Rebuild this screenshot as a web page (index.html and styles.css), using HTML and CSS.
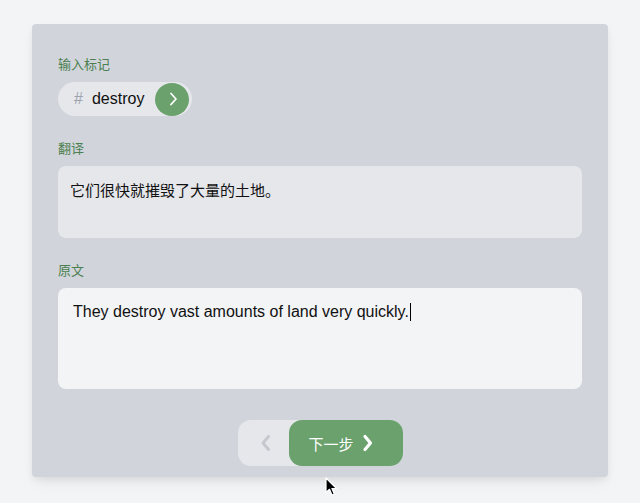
FILE: index.html
```html
<!DOCTYPE html>
<html lang="zh">
<head>
<meta charset="utf-8">
<link rel="stylesheet" href="styles.css">
</head>
<body>
<div class="card">
  <div class="section">
    <div class="label">输入标记</div>
    <div class="pill">
      <span class="hash">#</span>
      <span class="word">destroy</span>
      <span class="go">
        <svg width="12" height="14" viewBox="0 0 12 14"><path d="M4 1.5 L9 7 L4 12.5" fill="none" stroke="#fff" stroke-width="1.8" stroke-linecap="round" stroke-linejoin="round"/></svg>
      </span>
    </div>
  </div>
  <div class="section">
    <div class="label">翻译</div>
    <div class="box box-trans">它们很快就摧毁了大量的土地。</div>
  </div>
  <div class="section">
    <div class="label">原文</div>
    <div class="box box-src">They destroy vast amounts of land very quickly.<span class="caret"></span></div>
  </div>
  <div class="actions">
    <div class="group">
      <button class="prev" type="button">
        <svg width="12" height="18" viewBox="0 0 12 18"><path d="M8.5 2.5 L3 9 L8.5 15.5" fill="none" stroke="#c5c9ce" stroke-width="3" stroke-linecap="round" stroke-linejoin="round"/></svg>
      </button>
      <button class="next" type="button">
        <span>下一步</span>
        <svg width="12" height="18" viewBox="0 0 12 18"><path d="M3 2.5 L8.5 9 L3 15.5" fill="none" stroke="#fff" stroke-width="3.2" stroke-linecap="round" stroke-linejoin="round"/></svg>
      </button>
    </div>
  </div>
</div>
<svg class="cursor" width="14" height="20" viewBox="0 0 14 20"><path d="M1 1 L1 15.5 L4.5 12.3 L7 18 L9.3 17 L6.9 11.5 L11.5 11.5 Z" fill="#000" stroke="#fff" stroke-width="1.2" stroke-linejoin="round"/></svg>
</body>
</html>
```
FILE: styles.css
```css
html, body {
  margin: 0;
  padding: 0;
}
body {
  background: #f3f4f6;
  font-family: "Liberation Sans", "Noto Sans CJK SC", sans-serif;
  color: #111;
  height: 503px;
  overflow: hidden;
  position: relative;
}
.card {
  width: 576px;
  box-sizing: border-box;
  margin: 24px auto 0;
  background: #d1d5db;
  border-radius: 4px;
  padding: 30px 26px 11px;
  box-shadow: 0 8px 14px -4px rgba(0,0,0,0.08), 0 3px 6px rgba(0,0,0,0.05);
}
.section + .section {
  margin-top: 22px;
}
.label {
  font-family: "Noto Sans CJK SC", sans-serif;
  font-size: 13px;
  line-height: 20px;
  color: #4c7f50;
  margin-bottom: 8px;
}
.pill {
  display: inline-flex;
  align-items: center;
  height: 34px;
  box-sizing: border-box;
  padding: 0 3px 0 16px;
  background: #e5e7eb;
  border-radius: 17px;
}
.hash {
  color: #9ca3af;
  font-size: 16px;
  margin-right: 9px;
}
.word {
  font-size: 16px;
  color: #111;
}
.go {
  width: 34px;
  height: 33px;
  margin-left: 11px;
  border-radius: 50%;
  background: #6aa16d;
  display: flex;
  align-items: center;
  justify-content: center;
}
.go svg {
  margin-left: 2px;
}
.box {
  box-sizing: border-box;
  border-radius: 8px;
  color: #111;
}
.box-trans {
  height: 72px;
  background: #e5e7eb;
  padding: 12px 12px;
  font-family: "Noto Sans CJK SC", sans-serif;
  font-size: 15px;
  line-height: 24px;
}
.box-src {
  height: 101px;
  background: #f3f4f6;
  padding: 12px 15px;
  font-size: 16px;
  line-height: 24px;
}
.caret {
  display: inline-block;
  width: 1px;
  height: 18px;
  background: #000;
  vertical-align: -4px;
  margin-left: 1px;
}
.actions {
  margin-top: 31px;
  display: flex;
  justify-content: center;
}
.group {
  display: flex;
  height: 46px;
  background: #e5e7eb;
  border-radius: 13px;
}
.prev, .next {
  border: 0;
  margin: 0;
  padding: 0;
  font: inherit;
  display: flex;
  align-items: center;
  cursor: pointer;
}
.prev {
  width: 51px;
  background: transparent;
  justify-content: center;
  padding-left: 5px;
  box-sizing: border-box;
}
.next {
  width: 114px;
  background: #6aa16d;
  border-radius: 13px;
  color: #fff;
  padding-left: 20px;
  box-sizing: border-box;
  font-family: "Noto Sans CJK SC", sans-serif;
  font-size: 15px;
  gap: 8px;
}
.cursor {
  position: absolute;
  left: 325px;
  top: 477px;
}
```
